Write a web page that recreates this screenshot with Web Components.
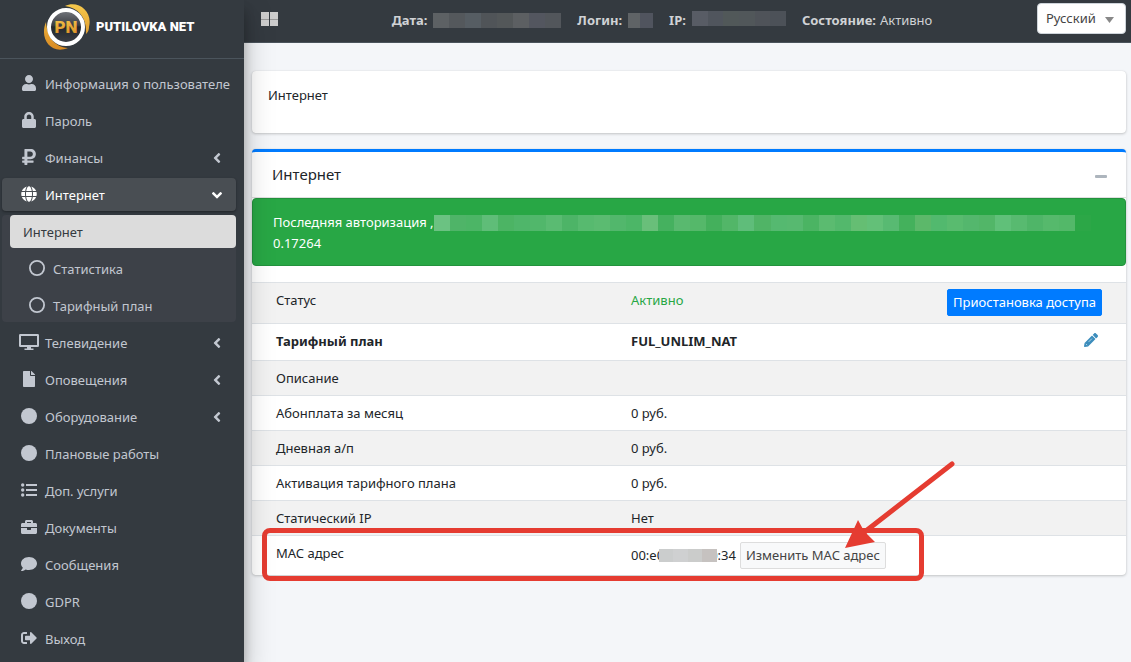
<!DOCTYPE html>
<html lang="ru">
<head>
<meta charset="utf-8">
<meta name="viewport" content="width=device-width, initial-scale=1">
<title>Putilovka Net</title>
<style>
html,body{margin:0;height:100%}
body{font:13px/21px "Noto Sans","Open Sans",sans-serif;color:#212529;background:#f4f6f9}
</style>
</head>
<body>
<app-shell>
  <side-bar slot="side">
    <nav-item icon="user">Информация о пользователе</nav-item>
    <nav-item icon="lock">Пароль</nav-item>
    <nav-item icon="ruble" arrow="left">Финансы</nav-item>
    <nav-item icon="globe" arrow="down" active>Интернет</nav-item>
    <nav-group>
      <nav-item selected>Интернет</nav-item>
      <nav-item icon="ring">Статистика</nav-item>
      <nav-item icon="ring">Тарифный план</nav-item>
    </nav-group>
    <nav-item icon="desktop" arrow="left">Телевидение</nav-item>
    <nav-item icon="file" arrow="left">Оповещения</nav-item>
    <nav-item icon="dot" arrow="left">Оборудование</nav-item>
    <nav-item icon="dot">Плановые работы</nav-item>
    <nav-item icon="list">Доп. услуги</nav-item>
    <nav-item icon="case">Документы</nav-item>
    <nav-item icon="comment">Сообщения</nav-item>
    <nav-item icon="dot">GDPR</nav-item>
    <nav-item icon="exit">Выход</nav-item>
  </side-bar>
  <top-bar slot="top"></top-bar>
  <plain-card>Интернет</plain-card>
  <service-card></service-card>
</app-shell>

<script>
const icons = {
  user:[448,512,14,'<path d="M224 256c70.7 0 128-57.3 128-128S294.7 0 224 0 96 57.3 96 128s57.3 128 128 128zm89.6 32h-16.7c-22.2 10.2-46.9 16-72.9 16s-50.6-5.8-72.9-16h-16.7C60.2 288 0 348.2 0 422.4V464c0 26.5 21.5 48 48 48h352c26.5 0 48-21.5 48-48v-41.6c0-74.2-60.2-134.4-134.4-134.4z"/>'],
  lock:[448,512,14,'<path d="M400 224h-24v-72C376 68.2 307.8 0 224 0S72 68.2 72 152v72H48c-26.5 0-48 21.5-48 48v192c0 26.5 21.5 48 48 48h352c26.5 0 48-21.5 48-48V272c0-26.5-21.5-48-48-48zm-104 0H152v-72c0-39.7 32.3-72 72-72s72 32.3 72 72v72z"/>'],
  ruble:[384,448,14,'<path d="M239.36 288C324.48 288 384 228.542 384 143.071S324.48 0 239.36 0H76c-6.627 0-12 5.373-12 12v206.632H12c-6.627 0-12 5.373-12 12V276c0 6.627 5.373 12 12 12h52v32H12c-6.627 0-12 5.373-12 12v40c0 6.627 5.373 12 12 12h52v52c0 6.627 5.373 12 12 12h58.56c6.627 0 12-5.373 12-12v-52H308c6.627 0 12-5.373 12-12v-40c0-6.627-5.373-12-12-12H146.56v-32h92.8zm-92.8-219.252h78.72c46.72 0 74.88 29.11 74.88 74.323 0 45.832-28.16 75.561-76.16 75.561h-77.44V68.748z"/>'],
  globe:[496,512,16,'<path d="M336.5 160C322 70.7 287.8 8 248 8s-74 62.7-88.5 152h177zM152 256c0 22.2 1.2 43.5 3.3 64h185.3c2.1-20.5 3.3-41.8 3.3-64s-1.2-43.5-3.3-64H155.3c-2.1 20.5-3.3 41.8-3.3 64zm324.7-96c-28.6-67.9-86.5-120.4-158-141.6 24.4 33.8 41.2 84.7 50 141.6h108zM177.2 18.4C105.8 39.6 47.8 92.1 19.3 160h108c8.7-56.9 25.5-107.8 49.9-141.6zM487.4 192H372.7c2.1 21 3.3 42.5 3.3 64s-1.2 43-3.3 64h114.6c5.5-20.5 8.6-41.8 8.6-64s-3.1-43.5-8.5-64zM120 256c0-21.5 1.2-43 3.3-64H8.6C3.2 212.5 0 233.8 0 256s3.2 43.5 8.6 64h114.6c-2-21-3.2-42.5-3.2-64zm39.5 96c14.5 89.3 48.7 152 88.5 152s74-62.7 88.5-152h-177zm159.3 141.6c71.4-21.2 129.4-73.7 158-141.6h-108c-8.8 56.9-25.6 107.8-50 141.6zM19.3 352c28.6 67.9 86.5 120.4 158 141.6-24.4-33.8-41.2-84.7-50-141.6h-108z"/>'],
  ring:[16,16,16,'<circle cx="8" cy="8" r="7.1" fill="none" stroke="currentColor" stroke-width="1.8"/>'],
  dot:[16,16,16,'<circle cx="8" cy="8" r="8"/>'],
  desktop:[20,16,20,'<path fill-rule="evenodd" d="M1.3 0h17.400A1.300 1.300 0 0 1 20 1.300v10.400a1.300 1.300 0 0 1-1.300 1.300H12v1.500h2.500V16h-9v-1.500H8V13H1.300A1.300 1.300 0 0 1 0 11.700V1.300A1.300 1.300 0 0 1 1.300 0zM2 2v9h16V2z"/>'],
  file:[384,512,12,'<path d="M224 136V0H24C10.700 0 0 10.700 0 24v464c0 13.300 10.700 24 24 24h336c13.300 0 24-10.700 24-24V160H248c-13.200 0-24-10.800-24-24zm160-14.100v6.100H256V0h6.100c6.400 0 12.500 2.500 17 7l97.900 98c4.500 4.500 7 10.600 7 16.900z"/>'],
  list:[16,16,16,'<circle cx="1.700" cy="3" r="1.700"/><circle cx="1.700" cy="8" r="1.700"/><circle cx="1.700" cy="13" r="1.700"/><path d="M5 2h11v2H5zM5 7h11v2H5zM5 12h11v2H5z"/>'],
  case:[512,512,16,'<path d="M320 336c0 8.840-7.160 16-16 16h-96c-8.840 0-16-7.160-16-16v-48H0v144c0 25.600 22.400 48 48 48h416c25.600 0 48-22.400 48-48V288H320v48zm144-208h-80V80c0-25.600-22.400-48-48-48H176c-25.600 0-48 22.400-48 48v48H48c-25.600 0-48 22.400-48 48v80h512v-80c0-25.600-22.400-48-48-48zm-144 0H192V96h128v32z"/>'],
  comment:[512,512,16,'<path d="M256 32C114.600 32 0 125.100 0 240c0 49.600 21.400 95 57 130.700C44.500 421.100 2.700 466 2.200 466.500c-2.200 2.300-2.800 5.700-1.500 8.700S4.800 480 8 480c66.300 0 116-31.800 140.600-51.400 32.700 12.300 69 19.400 107.400 19.400 141.400 0 256-93.100 256-208S397.400 32 256 32z"/>'],
  exit:[512,512,16,'<path d="M497 273L329 441c-15 15-41 4.500-41-17v-96H152c-13.300 0-24-10.700-24-24v-96c0-13.300 10.700-24 24-24h136V88c0-21.400 25.900-32 41-17l168 168c9.300 9.400 9.300 24.600 0 34zM192 436v-40c0-6.600-5.400-12-12-12H96c-17.700 0-32-14.300-32-32V160c0-17.700 14.300-32 32-32h84c6.600 0 12-5.400 12-12V76c0-6.600-5.400-12-12-12H96c-53 0-96 43-96 96v192c0 53 43 96 96 96h84c6.600 0 12-5.400 12-12z"/>'],
  left:[256,512,8,'<path d="M31.700 239l136-136c9.400-9.400 24.600-9.400 33.900 0l22.600 22.600c9.400 9.400 9.400 24.600 0 33.900L127.900 256l96.400 96.400c9.400 9.400 9.400 24.600 0 33.900L201.700 409c-9.400 9.400-24.600 9.400-33.900 0l-136-136c-9.500-9.400-9.500-24.600-.1-34z"/>'],
  down:[16,16,16,'<path d="M7.500 11.300 3.200 7a.8.8 0 0 1 0-1.100l.7-.7a.8.8 0 0 1 1.100 0l3 3 3-3a.8.8 0 0 1 1.100 0l.7.7a.8.8 0 0 1 0 1.100L8.500 11.300a.8.8 0 0 1-1 0z"/>'],
  pencil:[512,512,14,'<path d="M497.900 142.100l-46.100 46.100c-4.700 4.700-12.300 4.700-17 0l-111-111c-4.700-4.700-4.700-12.300 0-17l46.100-46.100c18.700-18.700 49.100-18.700 67.900 0l60.100 60.100c18.800 18.700 18.800 49.100 0 67.900zM284.200 99.800L21.600 362.400.4 483.900c-2.900 16.400 11.400 30.600 27.800 27.800l121.500-21.300 262.600-262.600c4.700-4.700 4.700-12.300 0-17l-111-111c-4.800-4.700-12.400-4.700-17.100 0z"/><path d="M170 325 290 205M70 398l46 46" stroke="#fff" stroke-width="22"/>']
};
function icon(name){
  const [w,h,width,body]=icons[name];
  return `<svg viewBox="0 0 ${w} ${h}" width="${width}" height="16" fill="currentColor" aria-hidden="true">${body}</svg>`;
}
function define(name, render){
  customElements.define(name, class extends HTMLElement{
    connectedCallback(){
      if(!this.shadowRoot) this.attachShadow({mode:'open'}).innerHTML=render(this);
    }
  });
}

define('app-shell',()=>`<style>
:host{display:grid;grid-template-columns:244px minmax(0,1fr);min-height:100%}
main{display:flex;flex-direction:column;min-width:0}
.content{display:flex;flex-direction:column;gap:16px;padding:28px 5px 16px 8px}
</style><slot name="side"></slot><main><slot name="top"></slot><div class="content"><slot></slot></div></main>`);

define('side-bar',()=>`<style>
:host{display:block;background:#343a40;position:relative;z-index:2;box-shadow:0 14px 28px rgba(0,0,0,.25),0 10px 10px rgba(0,0,0,.22)}
.brand{display:flex;align-items:center;gap:6px;height:59px;box-sizing:border-box;padding:0 0 5px 42px;border-bottom:1px solid #4b545c;color:#fff;text-decoration:none;font:900 13px/24px Roboto,"Liberation Sans",sans-serif;white-space:nowrap}
.brand svg{flex:none}
nav{display:flex;flex-direction:column;gap:4px;padding:8px 8px 8px 2px}
</style>
<a class="brand" href="#"><svg width="48" height="48" viewBox="0 0 48 48" aria-hidden="true">
<defs><linearGradient id="g" x1="0" y1="0" x2="0" y2="1"><stop offset="0" stop-color="#f5c84c"/><stop offset="1" stop-color="#d98a22"/></linearGradient><linearGradient id="k" x1="0" y1="0" x2="0" y2="1"><stop offset="0" stop-color="#777a80"/><stop offset=".45" stop-color="#3a3d43"/><stop offset=".5" stop-color="#24272c"/><stop offset="1" stop-color="#3c4047"/></linearGradient></defs>
<path d="M23 3C36-3 51 8 47 24c0 3-1 5-3 7C45 15 37 5 23 3zM4 19C-3 36 9 52 26 45 12 44 5 33 4 19z" fill="url(#g)"/>
<circle cx="24" cy="24" r="17" fill="url(#k)" stroke="#fff" stroke-width="4"/>
<text x="24" y="30" text-anchor="middle" font-family="Roboto,sans-serif" font-weight="900" font-size="17" fill="url(#g)">PN</text></svg><span>PUTILOVKA NET</span></a>
<nav><slot></slot></nav>`);

define('nav-group',()=>`<style>
:host{display:flex;flex-direction:column;gap:4px;padding-left:8px;background:#3d4148;border-radius:4px}
</style><slot></slot>`);

define('nav-item',el=>{
  const i=el.getAttribute('icon'), a=el.getAttribute('arrow');
  return `<style>
:host{display:block;color:#c2c7d0}
a{display:flex;align-items:center;height:33px;padding:0 15px 0 15px;border-radius:4px;color:inherit;text-decoration:none;white-space:nowrap}
.ico{flex:none;display:flex;justify-content:center;width:24px;margin-right:4px;padding-bottom:2px}
.label{flex:1;padding-top:2px}
.arrow{display:flex;justify-content:center;width:8px}
.arrow svg{flex:none}
:host([active]){color:#fff}
:host([active]) a{background:#494e53;box-shadow:0 1px 3px rgba(0,0,0,.12),0 1px 2px rgba(0,0,0,.24)}
:host([selected]){color:#343a40}
:host([selected]) a{background:#dcdcdc;padding-left:13px}
</style><a href="#">${i?`<span class="ico">${icon(i)}</span>`:''}<span class="label"><slot></slot></span>${a?`<span class="arrow">${icon(a)}</span>`:''}</a>`;
});

/* A strip of equal blocks that hides a private value. */
define('mask-strip',el=>{
  const c=el.getAttribute('colors').split(' '), s=100/c.length;
  return `<style>:host{display:inline-block;height:15px;vertical-align:middle;background:linear-gradient(90deg,${c.map((x,n)=>`${x} ${n*s}% ${(n+1)*s}%`).join(',')})}</style>`;
});

define('top-bar',()=>`<style>
:host{display:flex;align-items:center;height:42px;background:#343a40;border-bottom:1px solid #4b545c;color:#d0d2d5;padding-right:5px}
button{border:0;background:none;padding:0 16px 4px 16px;color:#ccc;display:flex}
dl{flex:1;display:flex;justify-content:center;gap:16px;margin:0;padding:0 7px 2px 0;white-space:nowrap}
dl div{display:flex;align-items:center;gap:4px}
dt{font-weight:700}dd{margin:0;display:flex}
.date{width:128px;margin-left:2px}.login{width:25px;margin-left:2px}.ip{width:94px;margin:0 0 4px 2px}
.pick{position:relative;display:flex;margin-bottom:6px}
select{appearance:none;width:89px;height:31px;border:1px solid #ced4da;border-radius:4px;background:#fff;color:#444;font:inherit;padding:0 8px}
.pick svg{position:absolute;right:12px;top:14px;pointer-events:none}
</style>
<button type="button" aria-label="Меню"><svg width="18" height="14" fill="currentColor"><path d="M1 0h8v7H1zM10 0h8v7h-8zM1 8h8v6H1zM10 8h8v6h-8z"/><path d="M1 7h8v1H1zM10 7h8v1h-8z" fill="#999"/></svg></button>
<dl><div><dt>Дата:</dt><dd><mask-strip class="date" colors="#5d6164 #54585c #565d63 #505458 #535759 #5c5f62 #53565f #52565b"></mask-strip></dd></div>
<div><dt>Логин:</dt><dd><mask-strip class="login" colors="#5f6366 #50545e"></mask-strip></dd></div>
<div><dt>IP:</dt><dd><mask-strip class="ip" colors="#585c65 #50555d #515859 #51575a #4f5359 #4c5158"></mask-strip></dd></div>
<div><dt>Состояние:</dt><dd>Активно</dd></div></dl>
<label class="pick"><select aria-label="Язык"><option>Русский</option></select><svg width="9" height="6"><path d="M0 0h9L4.500 6z" fill="#888"/></svg></label>`);

define('plain-card',()=>`<style>
:host{display:block;background:#fff;border-radius:4px;padding:14px 16px 27px;box-shadow:0 0 1px rgba(0,0,0,.125),0 1px 3px rgba(0,0,0,.2)}
</style><slot></slot>`);

define('service-card',()=>`<style>
:host{display:block;position:relative}
section{background:#fff;border-top:3px solid #007bff;border-radius:4px;box-shadow:0 0 1px rgba(0,0,0,.125),0 1px 3px rgba(0,0,0,.2)}
header{display:flex;align-items:center;justify-content:space-between;height:45px;padding:0 18px 0 20px;border-bottom:1px solid #dfdfdf}
h3{margin:0;font-size:15px;font-weight:400}
button{font:inherit}
.fold{display:flex;border:0;padding:4px 0 0;background:none;color:#adb5bd}
.alert{box-sizing:border-box;border:1px solid #23923d;border-radius:4px;background:#28a745;color:#fff;padding:13px 20px 11px;margin-bottom:16px}
.alert p{margin:0;display:flex;align-items:center}
.alert mask-strip{flex:none;width:79%;height:16px}
table{width:100%;border-collapse:collapse;table-layout:fixed}
td,th{box-sizing:border-box;text-align:left;font-weight:400;vertical-align:top;border-top:1px solid #dee2e6;padding:7px 0 6px 24px;height:35px}
.strong th,.strong td{font-weight:700}
tr:nth-child(odd){background:#f2f2f2}
.c1{width:355px}.c3{width:220px}
td:last-child{text-align:right;padding-right:24px}
.ok{color:#28a745}
.status th,.status td{height:41px}
.status td:last-child{padding-top:6px}
.mac th,.mac td{height:39px}
.mac td:first-of-type{padding:6px 0 5px 24px}
.pause,.edit{height:27px;padding:0 5px;border-radius:2px;border:1px solid #007bff;background:#007bff;color:#fff;line-height:21px;white-space:nowrap}
.edit{border-color:#ddd;background:#f8f9fa;color:#444}
.pen{display:inline-flex;color:#3c8dbc;margin:1px 4px 0 0}
.val{display:flex;align-items:center;white-space:nowrap}
.val mask-strip{width:58px;height:13px;margin:0 -7px 0 -5px;position:relative}
.val .edit{margin-left:4px}
.frame{position:absolute;left:10px;bottom:-6px;width:662px;height:53px;box-sizing:border-box;border:5px solid #e53c31;border-radius:8px;pointer-events:none}
.pointer{position:absolute;left:592px;bottom:25px;pointer-events:none}
</style>
<section><header><h3>Интернет</h3><button class="fold" type="button" aria-label="Свернуть"><svg width="14" height="4"><rect x="1" width="12" height="3" rx="1" fill="currentColor"/></svg></button></header>
<div class="alert" role="alert"><p>Последняя авторизация ,<mask-strip colors="#6bc282 #4fb468 #4cb566 #5fbd78 #4cb464 #4fb66a #51b76b #5abb72 #4db467 #57ba6f #5bbb71 #52b76c #4cb667 #69bf7a #45b15f #59b96f #55b86a #44b05c #52b668 #5fbd7a #50b466 #55b970 #57b970 #4bb463 #5bbb70 #53b86c #65be73 #63c078 #58ba72 #44b15c #5cb86a #52b96e #59bb6f #54b76d #52b668 #60c079 #58ba70 #4fb568 #56b96c #53b869 #2ca747"></mask-strip></p><p>0.17264</p></div>
<table><colgroup><col class="c1"><col><col class="c3"></colgroup><tbody>
<tr class="status"><th scope="row">Статус</th><td class="ok">Активно</td><td><button class="pause" type="button">Приостановка доступа</button></td></tr>
<tr class="strong"><th scope="row">Тарифный план</th><td>FUL_UNLIM_NAT</td><td><a class="pen" href="#" aria-label="Изменить тарифный план">${icon('pencil')}</a></td></tr>
<tr><th scope="row">Описание</th><td></td><td></td></tr>
<tr><th scope="row">Абонплата за месяц</th><td>0 руб.</td><td></td></tr>
<tr><th scope="row">Дневная а/п</th><td>0 руб.</td><td></td></tr>
<tr><th scope="row">Активация тарифного плана</th><td>0 руб.</td><td></td></tr>
<tr><th scope="row">Статический IP</th><td>Нет</td><td></td></tr>
<tr class="mac"><th scope="row">MAC адрес</th><td><div class="val">00:e0<mask-strip colors="#cbcdcd #cfd0d1 #cbcccb #c6c2c0"></mask-strip>0:34<button class="edit" type="button">Изменить MAC адрес</button></div></td><td></td></tr>
</tbody></table></section>
<div class="frame"></div>
<svg class="pointer" width="112" height="90" viewBox="0 0 112 90" aria-hidden="true"><path d="M108 4 18 74" stroke="#e53c31" stroke-width="5" stroke-linecap="round"/><path d="M1 88 14 60 20 71 31 82z" fill="#e53c31"/></svg>`);
</script>
</body>
</html>
